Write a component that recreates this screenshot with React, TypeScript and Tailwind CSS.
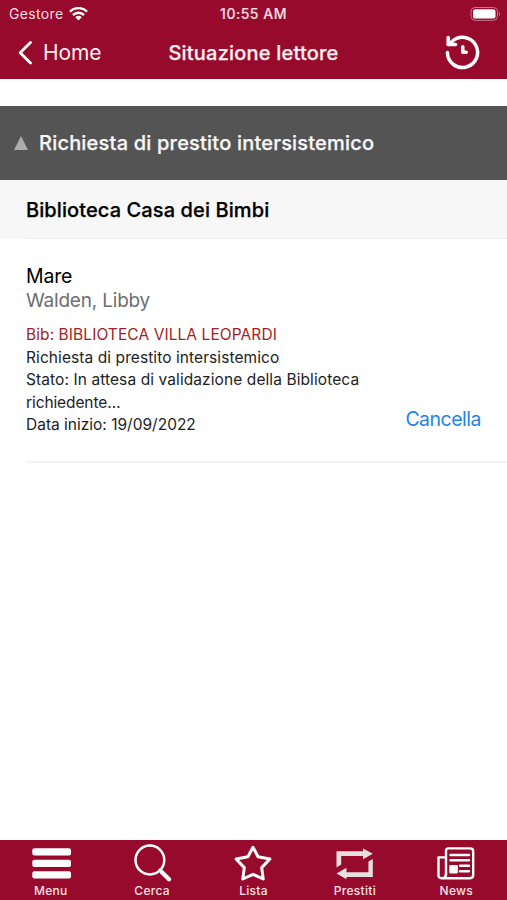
import type { ReactNode } from "react";

function StatusBar() {
  return (
    <div className="flex h-[27px] items-center justify-between pl-[9px] pr-[6px] text-[#f3dbe1]">
      <div className="flex w-[120px] items-center gap-[5px]">
        <span className="text-[14px] leading-[18px] tracking-[0.35px]">Gestore</span>
        <svg width="19" height="14" viewBox="0 0 19 14" fill="none" stroke="#fff" strokeWidth="2.5">
          <path d="M1 4.6 A12.1 12.1 0 0 1 18 4.6" />
          <path d="M4 8 A7.9 7.9 0 0 1 15 8" />
          <path d="M9.5 13.4 L6.3 10.2 A4.5 4.5 0 0 1 12.7 10.2 Z" fill="#fff" stroke="none" />
        </svg>
      </div>
      <span className="-ml-[3px] text-[14px] font-medium leading-[18px] tracking-[0.5px] [-webkit-text-stroke:0.2px_#f3dbe1]">10:55 AM</span>
      <div className="flex w-[120px] justify-end">
        <svg width="31" height="14" viewBox="0 0 31 14">
          <rect x="1" y="0.5" width="26.5" height="12.8" rx="4" fill="none" stroke="#c5798d" />
          <rect x="3" y="2.2" width="22.5" height="9.4" rx="2.2" fill="#fff" />
          <path d="M29 4.5 Q31 6.8 29 9 Z" fill="#c5798d" />
        </svg>
      </div>
    </div>
  );
}

function NavBar() {
  return (
    <div className="flex h-[52px] items-center justify-between pl-[18px] pr-[27px] text-[#fdeef1]">
      <div className="flex w-[140px] items-center gap-[10px]">
        <svg width="15" height="24" viewBox="0 0 15 24" fill="none" stroke="#fff" strokeWidth="2.8" strokeLinecap="round" strokeLinejoin="round">
          <path d="M12.5 1.5 L2.2 11.7 L12.5 22" />
        </svg>
        <span className="text-[21px] leading-[26px] tracking-[-0.15px]">Home</span>
      </div>
      <h1 className="whitespace-nowrap text-[20px] font-medium leading-[26px] tracking-[0.2px] [-webkit-text-stroke:0.25px_#fdeef1]">Situazione lettore</h1>
      <div className="flex w-[131px] justify-end">
        <svg width="36" height="36" viewBox="0 0 36 36" fill="none" stroke="#fff" strokeWidth="3.5" strokeLinecap="round" strokeLinejoin="round">
          <path d="M3.4 17.6 A15.1 15.1 0 1 0 8 6.6 L4.4 9.4" />
          <path d="M4.2 2.6 V9.6 H11.6" />
          <path d="M18.8 11.8 V17.2 H22.2" />
        </svg>
      </div>
    </div>
  );
}

function Tab({ label, children }: { label: string; children: ReactNode }) {
  return (
    <button className="flex flex-col items-center">
      <span className="flex h-[44px] items-center justify-center">{children}</span>
      <span className="text-[12px] font-medium leading-[14px] tracking-[0.3px]">{label}</span>
    </button>
  );
}

function TabBar() {
  return (
    <nav className="grid h-[60px] shrink-0 grid-cols-5 bg-[#980a2b] text-[#f9e4e9]">
      <Tab label="Menu">
        <svg width="40" height="40" viewBox="0 0 40 40" fill="#fff">
          <rect x="1.3" y="6.3" width="38.7" height="7.2" rx="2" />
          <rect x="1.3" y="17.8" width="38.7" height="7.2" rx="2" />
          <rect x="1.3" y="29.3" width="38.7" height="7.2" rx="2" />
        </svg>
      </Tab>
      <Tab label="Cerca">
        <svg width="40" height="40" viewBox="0 0 40 40" fill="none" stroke="#fff" strokeLinecap="round">
          <circle cx="17.9" cy="18" r="14.4" strokeWidth="2.5" />
          <path d="M27.5 27.9 L29.5 29.9" strokeWidth="2.5" />
          <path d="M29.7 29.9 L37 37.2" strokeWidth="4.2" />
        </svg>
      </Tab>
      <Tab label="Lista">
        <svg width="40" height="40" viewBox="0 0 40 40" fill="none" stroke="#fff" strokeWidth="3" strokeLinejoin="round">
          <path d="M20 5.2 L25.1 14.8 L36.9 17 L28.7 25.6 L30.2 37 L20 32.3 L9.8 37 L11.3 25.6 L3.1 17 L14.9 14.8 Z" />
        </svg>
      </Tab>
      <Tab label="Prestiti">
        <svg width="40" height="40" viewBox="0 0 40 40" fill="#e4e0dd">
          <path d="M1.5 9.2 H28 V6.4 L37.8 11.8 L28 17.2 V14 H6.2 V22.5 L1.5 25.4 Z" />
          <path d="M37.8 17 V35 H11.5 V37.2 L1.5 31.4 L11.5 25.8 V30.2 H33.4 V19.6 Z" />
        </svg>
      </Tab>
      <Tab label="News">
        <svg width="40" height="40" viewBox="0 0 40 40" fill="none" stroke="#fff" strokeWidth="2.4" strokeLinecap="round" strokeLinejoin="round">
          <path d="M10 33 V8.9 Q10 6.4 12.5 6.4 H34.2 Q37.2 6.4 37.2 9.4 V33 Q37.2 36.2 34 36.2 H5.5 Q2.5 36.2 2.5 33 V15.4 H9" />
          <path d="M10 32 Q10 35 7.5 36" />
          <path d="M14.5 13 H33 M14.5 18.3 H33 M24 23.7 H33 M24 29.2 H33" />
          <rect x="14.5" y="24.2" width="6.2" height="6" fill="#fff" />
        </svg>
      </Tab>
    </nav>
  );
}

function LoanRequest() {
  return (
    <article className="ml-[26px] flex h-[224px] justify-between border-b-2 border-[#f3f3f3] pr-[26px] pt-[25px]">
      <div className="whitespace-nowrap">
        <h3 className="text-[19.5px] leading-[24px] tracking-[-0.2px] text-black">Mare</h3>
        <p className="mt-px text-[19px] leading-[24px] tracking-[-0.2px] text-[#6e6e6e]">Walden, Libby</p>
        <div className="mt-[11px] text-[15.5px] leading-[22.6px] tracking-[0.08px] text-[#222]">
          <p className="text-[#a51c23]">Bib: BIBLIOTECA VILLA LEOPARDI</p>
          <p>Richiesta di prestito intersistemico</p>
          <p className="tracking-[0.09px]">Stato: In attesa di validazione della Biblioteca</p>
          <p className="tracking-[-0.1px]">richiedente…</p>
          <p className="tracking-[0px]">Data inizio: 19/09/2022</p>
        </div>
      </div>
      <button className="mt-[142px] h-[26px] text-[19.5px] leading-[26px] tracking-[-0.5px] text-[#2482ee]">Cancella</button>
    </article>
  );
}

export default function App() {
  return (
    <div className="flex h-[900px] w-[507px] flex-col overflow-hidden bg-white font-['Inter','Liberation_Sans',sans-serif]">
      <header className="h-[79px] shrink-0 bg-[#980a2b]">
        <StatusBar />
        <NavBar />
      </header>
      <main className="flex-1 pt-[27px]">
        <div className="flex h-[74px] items-center bg-[#545454] pl-[14px]">
          <svg width="14" height="14" viewBox="0 0 14 14" fill="#acacac">
            <path d="M7 0 L14 14 H0 Z" />
          </svg>
          <h2 className="ml-[11px] whitespace-nowrap text-[20px] font-medium leading-[26px] tracking-[0.2px] text-[#f6f6f6] [-webkit-text-stroke:0.25px_#f6f6f6]">Richiesta di prestito intersistemico</h2>
        </div>
        <div className="h-[59px] bg-[#f7f7f7] pl-[26px]">
          <h2 className="h-[59px] border-b border-[#eeeeee] text-[20px] font-medium leading-[60px] tracking-[0.1px] text-black [-webkit-text-stroke:0.25px_#000]">Biblioteca Casa dei Bimbi</h2>
        </div>
        <LoanRequest />
      </main>
      <TabBar />
    </div>
  );
}
